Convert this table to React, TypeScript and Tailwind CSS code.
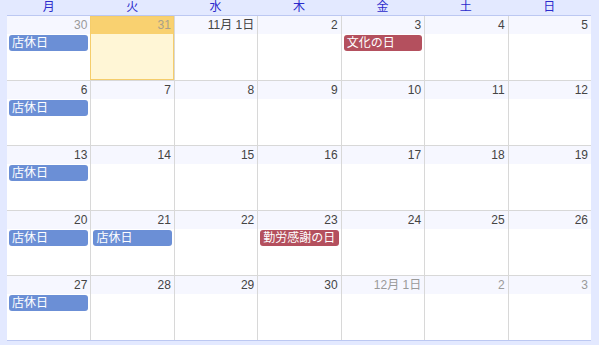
import React from "react"

type Ev = { title: string; color: "blue" | "red" }
type Day = { label: string; other?: boolean; today?: boolean; events?: Ev[] }

const off: Ev = { title: "店休日", color: "blue" }

const weeks: Day[][] = [
  [
    { label: "30", other: true, events: [off] },
    { label: "31", other: true, today: true },
    { label: "11月 1日" },
    { label: "2" },
    { label: "3", events: [{ title: "文化の日", color: "red" }] },
    { label: "4" },
    { label: "5" },
  ],
  [
    { label: "6", events: [off] },
    { label: "7" },
    { label: "8" },
    { label: "9" },
    { label: "10" },
    { label: "11" },
    { label: "12" },
  ],
  [
    { label: "13", events: [off] },
    { label: "14" },
    { label: "15" },
    { label: "16" },
    { label: "17" },
    { label: "18" },
    { label: "19" },
  ],
  [
    { label: "20", events: [off] },
    { label: "21", events: [off] },
    { label: "22" },
    { label: "23", events: [{ title: "勤労感謝の日", color: "red" }] },
    { label: "24" },
    { label: "25" },
    { label: "26" },
  ],
  [
    { label: "27", events: [off] },
    { label: "28" },
    { label: "29" },
    { label: "30" },
    { label: "12月 1日", other: true },
    { label: "2", other: true },
    { label: "3", other: true },
  ],
]

const dayNames = ["月", "火", "水", "木", "金", "土", "日"]

function Cell({ day, first }: { day: Day; first: boolean }) {
  const border = first ? "" : "border-l border-[#d8d8d8]"
  if (day.today) {
    return (
      <div className={`${border} flex flex-col bg-[#fff6d6] outline outline-1 outline-[#f5cd6b] -outline-offset-1 relative`}>
        <div className="h-[18px] bg-[#f9d170] text-right pr-[3px] text-[12px] leading-[18px] text-[#a8a08a]">
          {day.label}
        </div>
      </div>
    )
  }
  return (
    <div className={`${border} flex flex-col bg-white`}>
      <div
        className={`h-[18px] bg-[#f6f7ff] text-right pr-[3px] text-[12px] leading-[18px] ${
          day.other ? "text-[#9a9a9a]" : "text-[#444]"
        }`}
      >
        {day.label}
      </div>
      {day.events?.map((e, i) => (
        <div
          key={i}
          className={`mx-[2px] mt-px h-[16px] rounded-[3px] pl-[3px] text-[12px] leading-[16px] text-white ${
            e.color === "blue" ? "bg-[#6b8fd6]" : "bg-[#b4505e]"
          }`}
        >
          {e.title}
        </div>
      ))}
    </div>
  )
}

export default function App() {
  return (
    <div
      className="w-[599px] h-[345px] bg-[#e3e9ff] pl-[7px] pr-[8px]"
      style={{ fontFamily: '"Liberation Sans", "Noto Sans CJK JP", sans-serif' }}
    >
      <div className="grid grid-cols-7 h-[16px] border-b border-[#bcc8f2]">
        {dayNames.map((d) => (
          <div key={d} className="text-center text-[12px] leading-[15px] text-[#2b2bcc]">
            {d}
          </div>
        ))}
      </div>
      {weeks.map((w, wi) => (
        <div
          key={wi}
          className={`grid grid-cols-7 h-[65px] border-b ${
            wi === weeks.length - 1 ? "border-[#bcc8f2]" : "border-[#d8d8d8]"
          }`}
        >
          {w.map((d, di) => (
            <Cell key={di} day={d} first={di === 0} />
          ))}
        </div>
      ))}
    </div>
  )
}
